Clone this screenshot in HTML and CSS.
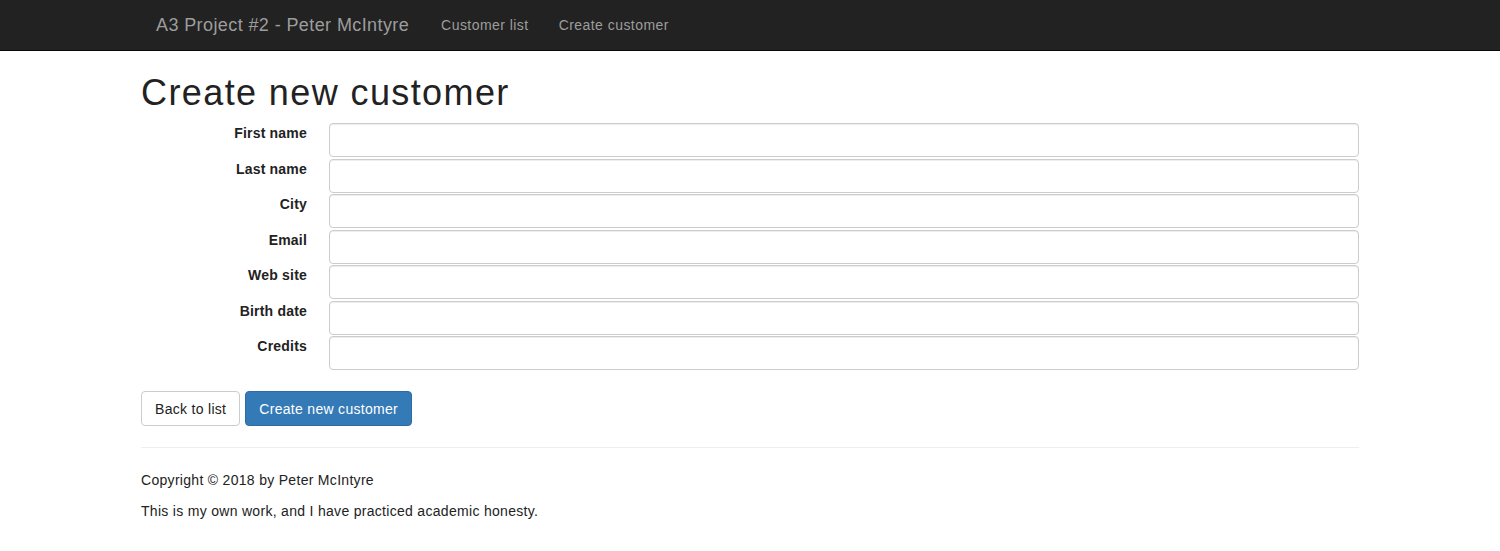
FILE: index.html
```html
<!DOCTYPE html>
<html>
<head>
<meta charset="utf-8">
<title>Create new customer</title>
<link rel="stylesheet" href="styles.css">
</head>
<body>
<nav class="navbar">
  <div class="container nav-inner">
    <a class="brand" href="#">A3 Project #2 - Peter McIntyre</a>
    <a class="nav-link" href="#">Customer list</a>
    <a class="nav-link" href="#">Create customer</a>
  </div>
</nav>
<main class="container">
  <h1 class="title">Create new customer</h1>
  <form class="form">
    <div class="fields">
      <label class="label">First name</label><input class="input" type="text">
      <label class="label">Last name</label><input class="input" type="text">
      <label class="label">City</label><input class="input" type="text">
      <label class="label">Email</label><input class="input" type="text">
      <label class="label">Web site</label><input class="input" type="text">
      <label class="label">Birth date</label><input class="input" type="text">
      <label class="label">Credits</label><input class="input" type="text">
    </div>
    <div class="actions">
      <a class="btn btn-default" href="#">Back to list</a>
      <button class="btn btn-primary" type="button">Create new customer</button>
    </div>
  </form>
  <hr class="rule">
  <footer class="footer">
    <p class="para">Copyright © 2018 by Peter McIntyre</p>
    <p class="para">This is my own work, and I have practiced academic honesty.</p>
  </footer>
</main>
</body>
</html>
```
FILE: styles.css
```css
* { box-sizing: border-box; }
html, body { margin: 0; padding: 0; }
body {
  font-family: "Liberation Sans", Arial, sans-serif;
  font-size: 14px;
  line-height: 20px;
  letter-spacing: 0.3px;
  color: #333;
  background: #fff;
}
.container {
  width: 1218px;
  margin: 0 auto;
}
.navbar {
  background: #222;
  border-bottom: 1px solid #080808;
  height: 51px;
}
.nav-inner {
  display: flex;
  align-items: center;
  height: 50px;
}
.brand {
  font-size: 18px;
  line-height: 20px;
  letter-spacing: 0.4px;
  padding: 15px;
  color: #9d9d9d;
  text-decoration: none;
}
.nav-link {
  font-size: 14px;
  line-height: 20px;
  letter-spacing: 0.45px;
  padding: 15px;
  color: #9d9d9d;
  text-decoration: none;
}
.brand + .nav-link { margin-left: 2px; }
.title {
  font-size: 36px;
  font-weight: 500;
  line-height: 40px;
  letter-spacing: 1.4px;
  margin: 22px 0 10px;
  color: #222;
}
.fields {
  display: grid;
  grid-template-columns: 166px 1fr;
  column-gap: 22px;
  row-gap: 1.5px;
}
.label {
  font-weight: bold;
  text-align: right;
  padding-top: 0;
  line-height: 20px;
  letter-spacing: 0.2px;
  color: #222;
}
.input {
  height: 34px;
  width: 100%;
  padding: 6px 12px;
  font-family: inherit;
  font-size: 14px;
  color: #555;
  background: #fff;
  border: 1px solid #ccc;
  border-radius: 4px;
  box-shadow: inset 0 1px 1px rgba(0,0,0,.075);
}
.actions {
  display: flex;
  gap: 5px;
  margin-top: 21px;
}
.btn {
  display: inline-block;
  height: 35px;
  padding: 7px 13px;
  font-family: inherit;
  font-size: 14px;
  line-height: 20px;
  letter-spacing: 0.3px;
  border: 1px solid #ccc;
  border-radius: 4px;
  text-decoration: none;
  cursor: pointer;
}
.btn-default {
  color: #222;
  background: #fff;
}
.btn-primary {
  color: #fff;
  background: #337ab7;
  border-color: #2e6da4;
}
.rule {
  border: 0;
  border-top: 1px solid #eee;
  margin: 21px 0 22px;
}
.para {
  margin: 0 0 11px;
  color: #222;
}
```
